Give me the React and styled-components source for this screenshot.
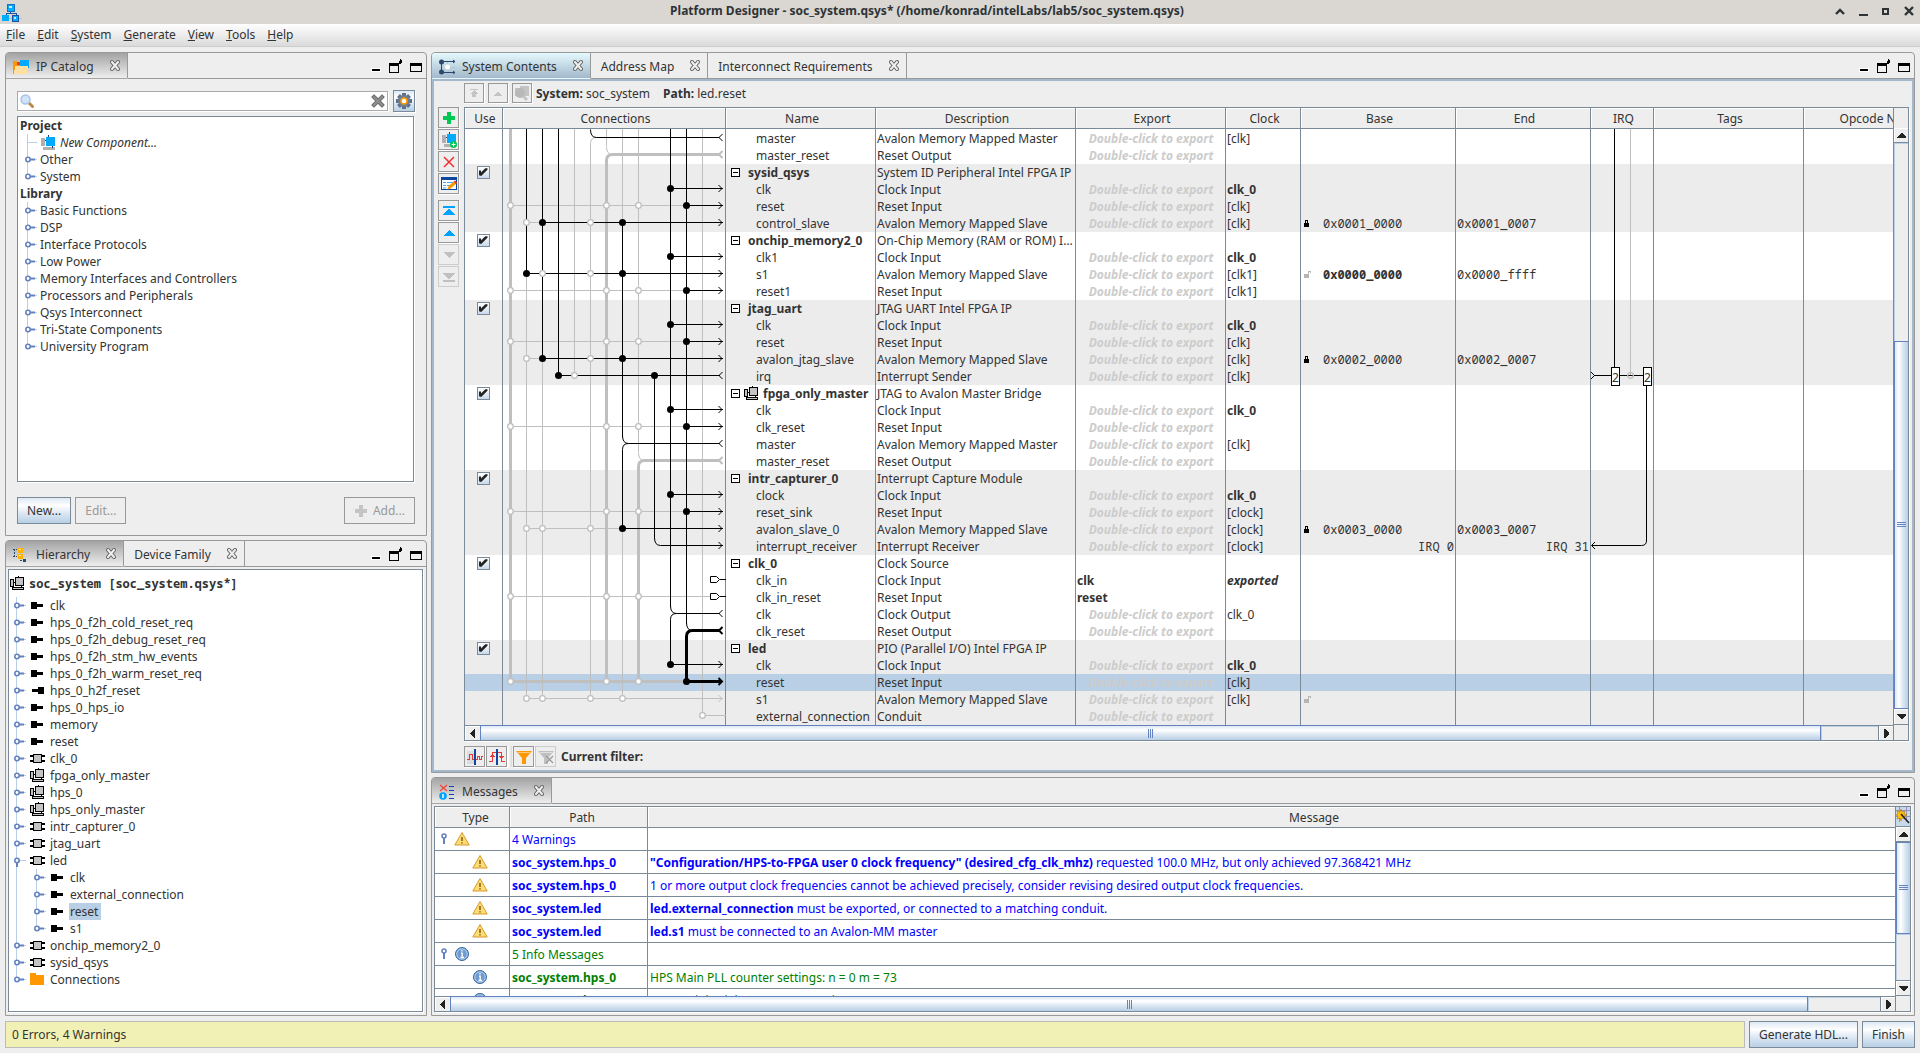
import React from "react";
import styled, { createGlobalStyle, css } from "styled-components";

const GlobalStyle = createGlobalStyle`
  * { box-sizing: border-box; }
  body {
    margin: 0;
    background: #eeeeee;
    color: #333333;
    font-family: "Noto Sans", "Open Sans", sans-serif;
    font-size: 12px;
    line-height: 17px;
  }
  button, input { font: inherit; color: inherit; margin: 0; }
  svg { display: block; flex: none; }
`;

const LINE = "#7a8a99";
const EDGE = "#999999";
const BLUE = "#6382bf";
const PALE = "#b8cfe5";
const WIRE = "#bfbfbf";
const mono = `"Noto Sans Mono", "DejaVu Sans Mono", "Liberation Mono", monospace`;
const ocean = (dir) =>
  `linear-gradient(${dir}, #dde8f3 0%, #ffffff 30%, #dde8f3 60%, #b8cfe5 100%)`;

/* ---------- window frame ---------- */

const Window = styled.div`
  display: flex;
  flex-direction: column;
  height: 100vh;
  min-width: 1100px;
  overflow: hidden;
`;

const TitleBar = styled.header`
  display: grid;
  grid-template-columns: 40px 1fr 106px;
  align-items: center;
  height: 24px;
  flex: none;
  padding: 0 2px;
  background: #dad6d2;
`;

const Title = styled.h1`
  margin: 0;
  padding-bottom: 3px;
  font-size: 12px;
  line-height: 18px;
  text-align: center;
  color: #2e3436;
  white-space: nowrap;
`;

const WindowControls = styled.div`
  display: flex;
  gap: 9px;
  justify-content: flex-end;
  padding: 0 2px 3px 0;
`;

const IconButton = styled.button`
  display: flex;
  align-items: center;
  justify-content: center;
  flex: none;
  padding: 0;
  border: 0;
  background: none;
`;

const MenuBar = styled.nav`
  display: flex;
  gap: 12px;
  height: 23px;
  flex: none;
  padding: 1px 6px 0;
  background: linear-gradient(#ffffff, #dadada);
  border-bottom: 1px solid #cccccc;
`;

const MenuItem = styled.button`
  padding: 0;
  border: 0;
  background: none;
  line-height: 17px;
  height: 18px;
  &::first-letter { text-decoration: underline; }
`;

const Workspace = styled.main`
  display: grid;
  grid-template-columns: 422px minmax(0, 1fr);
  gap: 4px;
  flex: 1;
  min-height: 0;
  padding: 5px;
`;

const Column = styled.div`
  display: flex;
  flex-direction: column;
  gap: 4px;
  min-height: 0;
  min-width: 0;
`;

const Panel = styled.section`
  display: flex;
  flex-direction: column;
  flex: ${(p) => (p.$size ? `0 0 ${p.$size}px` : "1")};
  min-height: 0;
  min-width: 0;
  border: 1px solid ${EDGE};
  border-radius: 4px 4px 0 0;
  overflow: hidden;
`;

const TabStrip = styled.div`
  display: flex;
  height: 26px;
  flex: none;
`;

const TabBox = styled.div`
  display: flex;
  align-items: center;
  padding: 0 7px 0 ${(p) => (p.$active ? 7 : 10)}px;
  border-right: 1px solid ${EDGE};
  border-bottom: 1px solid ${(p) => (p.$active ? "transparent" : EDGE)};
  ${(p) =>
    p.$active === "focus" &&
    css`background: linear-gradient(#e4fafd, #a3b8cc);`}
  ${(p) =>
    p.$active === "plain" &&
    css`background: linear-gradient(#a3a3a3, #eeeeee);`}
`;

const TabLabel = styled.button`
  display: flex;
  align-items: center;
  gap: 7px;
  margin-right: 16px;
  padding: 2px 0 0;
  border: 0;
  background: none;
  line-height: 17px;
  white-space: nowrap;
`;

const TabTools = styled.div`
  display: flex;
  flex: 1;
  align-items: center;
  justify-content: flex-end;
  gap: 6px;
  padding-right: 3px;
  border-bottom: 1px solid ${EDGE};
`;

/* ---------- buttons ---------- */

const TextButton = styled.button`
  display: flex;
  align-items: center;
  gap: 5px;
  height: 27px;
  padding: 0 9px;
  border: 1px solid ${LINE};
  background: ${ocean("to bottom")};
  white-space: nowrap;
  &:disabled {
    background: #eeeeee;
    border-color: ${EDGE};
    color: ${EDGE};
  }
`;

const ToolButton = styled.button`
  display: flex;
  align-items: center;
  justify-content: center;
  flex: none;
  width: ${(p) => p.$size || 21}px;
  height: ${(p) => p.$size || 21}px;
  padding: 0;
  border: 1px solid ${(p) => (p.$accent ? LINE : EDGE)};
  background: ${(p) => (p.$accent ? ocean("to bottom") : "#eeeeee")};
  box-shadow: 1px 1px 0 #ffffff;
  ${(p) => p.$faint && css`border-color: #cccccc; box-shadow: none;`}
`;

/* ---------- IP catalog ---------- */

const CatalogBody = styled.div`
  display: flex;
  flex-direction: column;
  flex: 1;
  min-height: 0;
  padding: 11px;
`;

const SearchRow = styled.div`
  display: flex;
  align-items: center;
  gap: 5px;
  margin-bottom: 4px;
`;

const SearchBox = styled.label`
  display: flex;
  align-items: center;
  flex: 1;
  height: 20px;
  padding: 0 2px;
  border: 1px solid #aaaaaa;
  background: #ffffff;
  box-shadow: 1px 1px 0 #ffffff;
`;

const SearchInput = styled.input`
  flex: 1;
  min-width: 0;
  height: 17px;
  border: 0;
  outline: 0;
  background: none;
`;

const TreeBox = styled.div`
  flex: 1;
  min-height: 0;
  overflow: hidden;
  margin: ${(p) => p.$margin || "0"};
  border: 1px solid ${LINE};
  box-shadow: 1px 1px 0 #ffffff;
  background: #ffffff;
`;

const Tree = styled.ul`
  margin: 0;
  padding: 0;
  list-style: none;
`;

const TreeRow = styled.li`
  display: flex;
  align-items: center;
  height: 17px;
  padding-left: ${(p) => p.$indent}px;
  white-space: nowrap;
`;

const TreeHeading = styled.li`
  height: 17px;
  padding-left: 2px;
  font-weight: 700;
`;

const TreeText = styled.span`
  padding: 0 3px 0 1px;
  margin-left: ${(p) => p.$gap}px;
  font-style: ${(p) => (p.$italic ? "italic" : "normal")};
  background: ${(p) => (p.$selected ? PALE : "transparent")};
`;

const RootRow = styled.div`
  display: flex;
  align-items: center;
  gap: 4px;
  height: 27px;
  padding: 0 0 1px 1px;
  font-family: ${mono};
  font-weight: 700;
  white-space: pre;
`;

const ActionRow = styled.div`
  display: flex;
  gap: 4px;
  margin-top: 15px;
`;

const Spacer = styled.div`
  flex: 1;
`;

/* ---------- system contents ---------- */

const ContentsBody = styled.div`
  display: grid;
  grid-template-columns: 21px minmax(0, 1fr);
  grid-template-rows: 20px minmax(0, 1fr) 22px;
  column-gap: 5px;
  row-gap: 4px;
  flex: 1;
  min-height: 0;
  padding: 2px 3px 3px 4px;
  border: 2px solid #a3b8cc;
`;

const PathBar = styled.div`
  grid-column: 2;
  display: flex;
  align-items: center;
  gap: 4px;
`;

const PathText = styled.span`
  margin-right: 9px;
  white-space: nowrap;
`;

const SideTools = styled.div`
  grid-column: 1;
  grid-row: 2;
  display: flex;
  flex-direction: column;
  gap: 1px;
`;

const SideGap = styled.div`
  height: 4px;
`;

const FilterBar = styled.div`
  grid-column: 2;
  display: flex;
  align-items: flex-end;
  gap: 1px;
  font-weight: 700;
`;

const FilterDivider = styled.div`
  width: 4px;
  height: 21px;
  background: linear-gradient(to right, #ffffff, #d8d8d8);
`;

const FilterLabel = styled.span`
  margin-left: 4px;
  line-height: 20px;
`;

const ScrollFrame = styled.div`
  display: grid;
  grid-template-columns: minmax(0, 1fr) 14px;
  grid-template-rows: 20px minmax(0, 1fr) 15px;
  min-height: 0;
  flex: 1;
  margin: ${(p) => p.$margin || "0"};
  border: 1px solid ${LINE};
  box-shadow: 1px 1px 0 #ffffff;
`;

const Viewport = styled.div`
  position: relative;
  grid-column: 1;
  grid-row: 1 / 3;
  overflow: hidden;
  border-right: 1px solid ${LINE};
  background: #ffffff;
`;

const Corner = styled.div`
  grid-column: 2;
  grid-row: 1;
  overflow: hidden;
  border-bottom: 1px solid ${(p) => (p.$plain ? "#eeeeee" : LINE)};
`;

const Grid = styled.table`
  table-layout: fixed;
  width: ${(p) => p.$width}px;
  border-spacing: 0;
  border-collapse: separate;
`;

const HeadCell = styled.th`
  height: 21px;
  padding: 0 0 0 ${(p) => p.$shift || 3}px;
  border-right: 1px solid ${LINE};
  border-bottom: 1px solid ${LINE};
  background: #eeeeee;
  box-shadow: inset 1px 1px 0 #ffffff;
  font-weight: 400;
  text-align: center;
  white-space: nowrap;
`;

const BodyRow = styled.tr`
  background: ${(p) => (p.$selected ? PALE : p.$shade ? "#ececec" : "#ffffff")};
`;

const Cell = styled.td`
  height: 17px;
  padding: 0 0 0 1px;
  border-right: 1px solid ${LINE};
  overflow: hidden;
  white-space: nowrap;
  text-overflow: ellipsis;
  font-weight: ${(p) => (p.$bold ? 700 : 400)};
  font-style: ${(p) => (p.$italic ? "italic" : "normal")};
  text-align: ${(p) => p.$align || "left"};
`;

const UseCell = styled(Cell)`
  padding: 0 1px 0 0;
`;

const GapRow = styled.tr`
  height: 1px;
`;

const GapCell = styled.td`
  padding: 0;
  border-right: 1px solid ${LINE};
`;

const DescCell = styled(Cell)`
  padding-right: 2px;
`;

const MonoCell = styled(Cell)`
  font-family: ${mono};
  padding-right: 1px;
`;

const ExportHint = styled(Cell)`
  color: #cccccc;
  font-weight: 700;
  font-style: italic;
  text-align: center;
`;

const NameWrap = styled.span`
  display: flex;
  align-items: center;
  gap: ${(p) => (p.$sub ? 4 : 8)}px;
  padding-left: ${(p) => (p.$child ? 29 : 4)}px;
`;

const BaseWrap = styled.span`
  display: flex;
  align-items: center;
  gap: 12px;
  padding-left: 2px;
  height: 17px;
`;

const UseBox = styled.input`
  appearance: none;
  display: block;
  width: 13px;
  height: 13px;
  margin: 0 auto;
  border: 1px solid ${LINE};
  background: linear-gradient(#ffffff, #c8d9ea);
  &:checked::before {
    content: "";
    display: block;
    width: 9px;
    height: 8px;
    margin: 1px;
    background: #222222;
    clip-path: polygon(0 32%, 28% 32%, 28% 56%, 75% 4%, 100% 4%, 100% 22%, 30% 100%, 0 88%);
  }
`;

/* drawings that lie over the rows of the table */
const Overlay = styled.svg`
  position: absolute;
  top: 21px;
  left: ${(p) => p.$left}px;
  pointer-events: none;
`;

/* ---------- scroll bars ---------- */

const BarBox = styled.div`
  display: flex;
  flex-direction: ${(p) => (p.$vertical ? "column" : "row")};
  grid-column: ${(p) => (p.$vertical ? 2 : 1)};
  grid-row: ${(p) => (p.$vertical ? 2 : 3)};
  background: #eeeeee;
  border-${(p) => (p.$vertical ? "bottom" : "right")}: 1px solid ${LINE};
  ${(p) => !p.$vertical && css`border-top: 1px solid ${LINE};`}
`;

const ArrowButton = styled(IconButton)`
  width: ${(p) => (p.$vertical ? 14 : 15)}px;
  height: ${(p) => (p.$vertical ? 15 : 14)}px;
  box-shadow: inset 1px 1px 0 #ffffff;
  border: 0 solid ${LINE};
  ${(p) => p.$edge && css`border-${p.$edge}-width: 1px;`}
`;

const Track = styled.div`
  flex: ${(p) => p.$part} ${(p) => p.$part} 0px;
  box-shadow: inset 1px 1px 0 ${PALE};
`;

const Thumb = styled.div`
  display: flex;
  align-items: center;
  justify-content: center;
  flex: ${(p) => p.$part} ${(p) => p.$part} 0px;
  border: 1px solid ${BLUE};
  ${(p) =>
    p.$vertical
      ? css`border-right: 0; background: ${ocean("to right")};`
      : css`border-bottom: 0; margin-top: -1px; background: ${ocean("to bottom")};`}
`;

/* ---------- messages ---------- */

const MsgCell = styled.td`
  height: 23px;
  padding: 0 2px;
  border-right: 1px solid ${LINE};
  border-bottom: 1px solid ${LINE};
  color: ${(p) => p.$tone};
  font-weight: ${(p) => (p.$bold ? 700 : 400)};
  white-space: nowrap;
`;

const TypeWrap = styled.span`
  display: flex;
  align-items: center;
  gap: 7px;
  padding-left: ${(p) => (p.$child ? 35 : 4)}px;
`;

/* ---------- status ---------- */

const StatusBar = styled.footer`
  display: flex;
  gap: 4px;
  flex: none;
  padding: 0 5px 5px;
`;

const StatusText = styled.output`
  flex: 1;
  height: 27px;
  padding: 4px 6px;
  border: 1px solid #bbbbbb;
  background: #f2f1b5;
`;

/* ---------- icons ---------- */

const Svg = ({ w = 16, h = 16, crisp = true, children }) => (
  <svg
    width={w}
    height={h}
    viewBox={`0 0 ${w} ${h}`}
    fill="none"
    shapeRendering={crisp ? "crispEdges" : "auto"}
    aria-hidden="true"
  >
    {children}
  </svg>
);

const AppIcon = () => (
  <Svg w={20} h={19}>
    <path d="M8.500 7v4M4.500 13v-3h10v3" stroke="#1c4fa0" />
    <path d="M0 15.500h20" stroke="#7fd0ff" />
    <rect x="5" y="1" width="7" height="7" fill="#00aeff" stroke="#1c6fc0" />
    <rect x="0" y="12" width="7" height="6" fill="#00aeff" />
    <rect x="10" y="12" width="6" height="6" fill="#00aeff" stroke="#1c4fa0" />
    <rect x="7" y="3" width="3" height="2" fill="#c9efff" />
    <rect x="12" y="14" width="2" height="2" fill="#c9efff" />
  </Svg>
);

const CloseIcon = () => (
  <Svg w={10} h={11} crisp={false}>
    <path d="M2 2l6 7M8 2l-6 7" stroke="#666" strokeWidth="4" strokeLinecap="square" />
    <path d="M2 2l6 7M8 2l-6 7" stroke="#eee" strokeWidth="2" strokeLinecap="square" />
  </Svg>
);

const MinIcon = () => (
  <Svg w={14} h={14}>
    <rect x="2" y="9" width="10" height="4" fill="#fff" />
    <rect x="3" y="10" width="8" height="2" fill="#000" />
  </Svg>
);

const FloatIcon = () => (
  <Svg w={14} h={14}>
    <rect x="0.500" y="4.500" width="9" height="9" fill="#eee" stroke="#000" />
    <rect x="0" y="4" width="10" height="3" fill="#000" />
    <path d="M8 4.500h2v-2h3M11.500 0v5M12.500 1v3" stroke="#000" />
  </Svg>
);

const MaxIcon = () => (
  <Svg w={14} h={14}>
    <rect x="1.500" y="4.500" width="11" height="8" fill="#eee" stroke="#000" />
    <rect x="1" y="4" width="12" height="3" fill="#000" />
  </Svg>
);

const CatalogIcon = () => (
  <Svg w={16} h={16}>
    <path d="M0 2h4l1 2h3v11H0z" fill="#ff9800" />
    <rect x="7" y="1" width="9" height="8" fill="#00aaff" />
    <rect x="4" y="3" width="3" height="3" fill="#e53935" />
    <path d="M2 7h13l-1 8H1z" fill="#ffe0a0" />
  </Svg>
);

const HierarchyIcon = () => (
  <Svg w={16} h={16}>
    <path d="M1.500 2v8M0 2.500h4M0 9.500h4M6.500 13.500h6" stroke="#2b4a6b" strokeDasharray="2 1" />
    <rect x="5" y="1" width="5" height="5" fill="#ffb300" />
    <rect x="5" y="7" width="5" height="5" fill="#ffb300" />
    <rect x="6" y="2" width="2" height="1" fill="#fff3b0" />
    <rect x="6" y="8" width="2" height="1" fill="#fff3b0" />
    <rect x="10" y="12" width="3" height="3" fill="#2b4a6b" />
  </Svg>
);

const ContentsIcon = () => (
  <Svg w={16} h={16} crisp={false}>
    <path d="M2.500 2.500v11M3 2.500h13M3 13.500h13" stroke="#2b4a6b" />
    <path d="M8.500 3v10M9 8.500h7" stroke="#b8c8d4" />
    <circle cx="2.500" cy="3" r="2.500" fill="#2b4a6b" />
    <circle cx="2.500" cy="13" r="2.500" fill="#2b4a6b" />
    <circle cx="8.500" cy="8" r="2.500" fill="#fff" />
    <path d="M14 1l2 1.500L14 4M14 12l2 1.500-2 1.500" stroke="#2b4a6b" />
  </Svg>
);

const MessagesIcon = () => (
  <Svg w={16} h={16} crisp={false}>
    <path d="M1 1l7 6M8 1L1 7" stroke="#f44336" strokeWidth="1.200" />
    <circle cx="4" cy="12" r="3.800" fill="#00a2ff" />
    <path d="M4 10v4" stroke="#fff" strokeWidth="1.500" />
    <path d="M10 2.500h5M10 6.500h5M10 10.500h5M10 14.500h5" stroke="#0d47a1" strokeWidth="1.200" />
  </Svg>
);

const SearchIcon = () => (
  <Svg w={14} h={14} crisp={false}>
    <path d="M9 9l3.500 3.500" stroke="#b98a4a" strokeWidth="3" strokeLinecap="round" />
    <circle cx="5.500" cy="5.500" r="4.500" fill="#cfe4fb" stroke="#a9c4e6" strokeWidth="1.500" />
  </Svg>
);

const ClearIcon = () => (
  <Svg w={14} h={14} crisp={false}>
    <path d="M3 3l8 8M11 3l-8 8" stroke="#666" strokeWidth="4" strokeLinecap="square" />
    <path d="M3 3l8 8M11 3l-8 8" stroke="#8e8e8e" strokeWidth="2.400" strokeLinecap="square" />
  </Svg>
);

const GearIcon = () => (
  <Svg w={16} h={16} crisp={false}>
    <g stroke="#5d7088" strokeWidth="4">
      <path d="M8 0v16M0 8h16M2.500 2.500l11 11M13.500 2.500l-11 11" />
    </g>
    <circle cx="8" cy="8" r="6" fill="#6a7d95" />
    <circle cx="8" cy="8" r="3" fill="#fff" stroke="#ff9800" strokeWidth="1.600" />
  </Svg>
);

const PlusIcon = ({ color = "#00c853" }) => (
  <Svg w={12} h={12}>
    <path d="M4 0h4v4h4v4H8v4H4V8H0V4h4z" fill={color} />
  </Svg>
);

const NewCompIcon = ({ badge }) => (
  <Svg w={16} h={16}>
    <rect x="1" y="3" width="4" height="8" fill="#b0b0b0" />
    <rect x="3" y="12" width="12" height="3" fill="#b0b0b0" />
    <path d="M8.500 0v2M5 5.500h2M12.500 10v3" stroke="#123a7a" />
    <rect x="6" y="2" width="9" height="9" fill="#00aaff" />
    {badge && (
      <g shapeRendering="auto">
        <circle cx="12.500" cy="12.500" r="3.500" fill="#00c853" />
        <path d="M12.500 10.500v4M10.500 12.500h4" stroke="#fff" />
      </g>
    )}
  </Svg>
);

const DrillIcon = () => (
  <Svg w={16} h={16} crisp={false}>
    <path d="M6 1h9v10H6zM1 3h4v8H1z" fill="#c4c4c4" />
    <circle cx="6" cy="8" r="5" fill="#b8b8b8" />
    <path d="M9 11l4 4" stroke="#c4c4c4" strokeWidth="3" />
  </Svg>
);

const DeleteIcon = () => (
  <Svg w={14} h={14} crisp={false}>
    <path d="M2 2l10 10M12 2L2 12" stroke="#f03030" strokeWidth="1.500" />
  </Svg>
);

const EditIcon = () => (
  <Svg w={16} h={16} crisp={false}>
    <rect x="0.500" y="1.500" width="15" height="12" fill="#fff" stroke="#0d47a1" />
    <rect x="0" y="1" width="16" height="3" fill="#0d47a1" />
    <path d="M2 6.500h3M6 6.500h6M2 9.500h3M6 9.500h3M2 12h3" stroke="#49a8ee" />
    <path d="M6.500 13.500l1-3.500 6-5 2 2.500-6 5z" fill="#ff9800" />
    <path d="M13.500 5l2 2.500" stroke="#e53935" strokeWidth="2" />
  </Svg>
);

const MoveIcon = ({ dir, end, color, size = 14 }) => (
  <Svg w={14} h={14}>
    <g transform={dir === "down" ? "rotate(180 7 7)" : undefined}>
      {end && <rect x="1" y="2" width="12" height="2" fill={color} />}
      <path d={end ? "M7 4l6 7H1z" : size < 14 ? "M7 5l4 5H3z" : "M7 4l6 6H1z"} fill={color} />
    </g>
  </Svg>
);

const SmallTop = () => (
  <Svg w={14} h={14}>
    <rect x="3" y="3" width="8" height="1" fill="#c4c4c4" />
    <path d="M7 4l4 4H9v3H5V8H3z" fill="#c4c4c4" />
  </Svg>
);

const ClockDomainIcon = () => (
  <Svg w={16} h={16}>
    <rect x="0" y="2" width="7" height="13" fill="#dcdcdc" />
    <path d="M0 10.500h2.500v-5h3v5h5v-3h2v3h1.500v-3H16" stroke="#e53935" />
    <rect x="7" y="0" width="2" height="16" fill="#0d47a1" />
  </Svg>
);

const ResetDomainIcon = () => (
  <Svg w={16} h={16}>
    <path d="M0 12.500h3.500v-9h9v9H16" stroke="#e53935" />
    <path d="M1 7.500h5M10 7.500h5M2 6.500h3M11 8.500h3" stroke="#e53935" />
    <rect x="7" y="0" width="2" height="16" fill="#0d47a1" />
  </Svg>
);

const FunnelIcon = ({ color, cross }) => (
  <Svg w={16} h={16} crisp={false}>
    <path d="M0 2h16l-6 7v6H6V9z" fill={color} />
    <path d="M2 3.500h12" stroke="#fff" opacity="0.500" />
    {cross && <path d="M8 7l7 7M15 7l-7 7" stroke="#999" strokeWidth="1.200" />}
  </Svg>
);

const PortIcon = ({ flip }) => (
  <Svg w={15} h={15}>
    <g transform={flip ? "rotate(180 7.500 7.500)" : undefined}>
      <path d="M1 4h6v2h6v3H7v2H1z" fill="#000" />
    </g>
  </Svg>
);

const ModuleIcon = () => (
  <Svg w={15} h={15}>
    <path d="M0 5h15M0 10h15" stroke="#000" strokeWidth="2" />
    <rect x="3.500" y="3.500" width="8" height="8" fill="#c4c4c4" stroke="#000" />
  </Svg>
);

const SubsystemIcon = () => (
  <Svg w={15} h={15}>
    <rect x="0.500" y="3.500" width="3" height="7" fill="#c4c4c4" stroke="#000" />
    <path d="M8 0v2M4 6h2M11 10v2" stroke="#000" strokeWidth="1" />
    <rect x="5.500" y="1.500" width="8" height="8" fill="#c4c4c4" stroke="#000" />
    <rect x="2.500" y="11.500" width="11" height="2" fill="#c4c4c4" stroke="#000" />
  </Svg>
);

const FolderIcon = () => (
  <Svg w={15} h={15}>
    <path d="M0 1h6v2h8v10H0z" fill="#ff9800" />
  </Svg>
);

const LockIcon = ({ open }) => (
  <Svg w={7} h={9}>
    <rect x="0" y="4" width="5" height="4" fill={open ? "#b5b5b5" : "#000"} />
    {open ? (
      <path d="M4.500 4V1.500h2V3" stroke="#b5b5b5" />
    ) : (
      <path d="M1 4V1h3v3H3V2H2v2z" fill="#000" />
    )}
  </Svg>
);

const MinusBox = () => (
  <Svg w={9} h={9}>
    <rect x="0.500" y="0.500" width="8" height="8" fill="#fff" stroke="#000" />
    <path d="M2 4.500h5" stroke="#000" />
  </Svg>
);

const WarnIcon = () => (
  <Svg w={16} h={16} crisp={false}>
    <path d="M8 1.500L15.200 14H.8z" fill="#fbdc75" stroke="#d99a2b" strokeLinejoin="round" />
    <path d="M8 6v4M8 11.200v1.300" stroke="#8a6416" strokeWidth="1.600" />
  </Svg>
);

const InfoIcon = () => (
  <Svg w={16} h={16} crisp={false}>
    <circle cx="8" cy="8" r="6.500" fill="#6f9bd1" stroke="#37699f" />
    <circle cx="8" cy="8" r="5.200" stroke="#c7dcf3" strokeWidth="0.800" />
    <path d="M8 4v1.600M7 7.200h1.200v4M6.500 11.500h3.500" stroke="#fff" strokeWidth="1.300" />
  </Svg>
);

const ExpandPin = () => (
  <Svg w={6} h={12} crisp={false}>
    <circle cx="3" cy="3" r="2" stroke={BLUE} strokeWidth="1.600" fill="#fff" />
    <path d="M3 5v6" stroke={BLUE} strokeWidth="2" />
  </Svg>
);

const WandIcon = () => (
  <Svg w={14} h={19} crisp={false}>
    <rect width="14" height="19" fill="#c8d9ea" />
    <path d="M0 3.500h14M3.500 0v15M10.500 0v15M0 9.500h14" stroke="#9b8fc0" />
    <path d="M5 2l1 3 3-1-1 3 3 1-3 1 1 3-3-1-1 3-1-3-3 1 1-3-2-1 2-1-1-3 3 1z" fill="#ffc107" stroke="#b57a00" strokeWidth="0.600" />
    <path d="M5 7l8 9" stroke="#222" strokeWidth="1.600" />
  </Svg>
);

const Arrow = ({ d }) => (
  <Svg w={9} h={9}>
    <path
      fill="#222"
      d={
        {
          up: "M4 2h1l4 4v1H0V6z",
          down: "M0 2h9v1L5 7H4L0 3z",
          left: "M2 4v1l4 4h1V0H6z",
          right: "M7 4v1L3 9H2V0h1z",
        }[d]
      }
    />
  </Svg>
);

const TreeHandle = ({ kind = "closed", last }) => (
  <Svg w={14} h={17} crisp={false}>
    <path d={last ? "M3.500 0v8" : "M3.500 0v17"} stroke={PALE} />
    {kind === "leaf" && <path d="M4 8.500h9" stroke={PALE} />}
    {kind !== "leaf" && kind !== "through" && (
      <>
        <path d="M4 8.500h9" stroke={PALE} />
        <path d={kind === "open" ? "M4 9v6" : "M5 8.500h6"} stroke={BLUE} strokeWidth="2" />
        <circle cx="4" cy="8.500" r="2.200" stroke={BLUE} strokeWidth="1.600" fill="#fff" />
      </>
    )}
  </Svg>
);

/* ---------- shared parts ---------- */

function Tab({ icon, label, active }) {
  return (
    <TabBox $active={active}>
      <TabLabel type="button">
        {icon}
        {label}
      </TabLabel>
      <IconButton type="button" aria-label={`Close ${label}`}>
        <CloseIcon />
      </IconButton>
    </TabBox>
  );
}

const PanelTools = () => (
  <TabTools>
    <IconButton type="button" aria-label="Minimize"><MinIcon /></IconButton>
    <IconButton type="button" aria-label="Detach"><FloatIcon /></IconButton>
    <IconButton type="button" aria-label="Maximize"><MaxIcon /></IconButton>
  </TabTools>
);

function ScrollBar({ vertical, before, thumb, after }) {
  return (
    <BarBox $vertical={vertical}>
      <ArrowButton type="button" $vertical={vertical} $edge={vertical && "bottom"} aria-label="Scroll back">
        <Arrow d={vertical ? "up" : "left"} />
      </ArrowButton>
      {before > 0 && <Track $part={before} />}
      <Thumb $vertical={vertical} $part={thumb}>
        <Svg w={9} h={9}>
          <path
            d={vertical ? "M0 1.500h9M0 3.500h9M0 5.500h9" : "M2.500 0v9M4.500 0v9M6.500 0v9"}
            stroke={BLUE}
            strokeWidth="1"
          />
        </Svg>
      </Thumb>
      {after > 0 && <Track $part={after} />}
      <ArrowButton type="button" $vertical={vertical} $edge={after > 0 ? (vertical ? "top" : "left") : undefined} aria-label="Scroll forward">
        <Arrow d={vertical ? "down" : "right"} />
      </ArrowButton>
    </BarBox>
  );
}

/* ---------- data ---------- */

const library = [
  "Basic Functions",
  "DSP",
  "Interface Protocols",
  "Low Power",
  "Memory Interfaces and Controllers",
  "Processors and Peripherals",
  "Qsys Interconnect",
  "Tri-State Components",
  "University Program",
];

const hierarchy = [
  ["port", "clk"],
  ["port", "hps_0_f2h_cold_reset_req"],
  ["port", "hps_0_f2h_debug_reset_req"],
  ["port", "hps_0_f2h_stm_hw_events"],
  ["port", "hps_0_f2h_warm_reset_req"],
  ["out", "hps_0_h2f_reset"],
  ["port", "hps_0_hps_io"],
  ["port", "memory"],
  ["port", "reset"],
  ["module", "clk_0"],
  ["sub", "fpga_only_master"],
  ["sub", "hps_0"],
  ["sub", "hps_only_master"],
  ["module", "intr_capturer_0"],
  ["module", "jtag_uart"],
  ["module", "led", "open"],
  ["port", "clk", "child"],
  ["port", "external_connection", "child"],
  ["port", "reset", "child", true],
  ["port", "s1", "childLast"],
  ["module", "onchip_memory2_0"],
  ["module", "sysid_qsys"],
  ["folder", "Connections", "last"],
];

const nodeIcons = {
  port: <PortIcon />,
  out: <PortIcon flip />,
  module: <ModuleIcon />,
  sub: <SubsystemIcon />,
  folder: <FolderIcon />,
};

const AMM = "Avalon Memory Mapped Master";
const AMS = "Avalon Memory Mapped Slave";
const CI = "Clock Input";
const RI = "Reset Input";
const RO = "Reset Output";

const modules = [
  { rows: [["master", AMM, "[clk]"], ["master_reset", RO]] },
  {
    name: "sysid_qsys",
    desc: "System ID Peripheral Intel FPGA IP",
    rows: [["clk", CI, "clk_0"], ["reset", RI, "[clk]"],
      ["control_slave", AMS, "[clk]", { lock: "on", base: "0x0001_0000", end: "0x0001_0007" }]],
  },
  {
    name: "onchip_memory2_0",
    desc: "On-Chip Memory (RAM or ROM) Intel FPGA IP",
    rows: [["clk1", CI, "clk_0"],
      ["s1", AMS, "[clk1]", { lock: "off", base: "0x0000_0000", strong: true, end: "0x0000_ffff" }],
      ["reset1", RI, "[clk1]"]],
  },
  {
    name: "jtag_uart",
    desc: "JTAG UART Intel FPGA IP",
    rows: [["clk", CI, "clk_0"], ["reset", RI, "[clk]"],
      ["avalon_jtag_slave", AMS, "[clk]", { lock: "on", base: "0x0002_0000", end: "0x0002_0007" }],
      ["irq", "Interrupt Sender", "[clk]"]],
  },
  {
    name: "fpga_only_master",
    sub: true,
    desc: "JTAG to Avalon Master Bridge",
    rows: [["clk", CI, "clk_0"], ["clk_reset", RI], ["master", AMM, "[clk]"], ["master_reset", RO]],
  },
  {
    name: "intr_capturer_0",
    desc: "Interrupt Capture Module",
    rows: [["clock", CI, "clk_0"], ["reset_sink", RI, "[clock]"],
      ["avalon_slave_0", AMS, "[clock]", { lock: "on", base: "0x0003_0000", end: "0x0003_0007" }],
      ["interrupt_receiver", "Interrupt Receiver", "[clock]", { irq: ["IRQ 0", "IRQ 31"] }]],
  },
  {
    name: "clk_0",
    desc: "Clock Source",
    rows: [["clk_in", CI, "exported", { exported: "clk" }], ["clk_in_reset", RI, "", { exported: "reset" }],
      ["clk", "Clock Output", "clk_0", { plain: true }], ["clk_reset", RO]],
  },
  {
    name: "led",
    desc: "PIO (Parallel I/O) Intel FPGA IP",
    rows: [["clk", CI, "clk_0"], ["reset", RI, "[clk]", { selected: true }],
      ["s1", AMS, "[clk]", { lock: "off" }], ["external_connection", "Conduit"]],
  },
];

const columns = [
  ["Use", 38], ["Connections", 223], ["Name", 150], ["Description", 200], ["Export", 150],
  ["Clock", 75], ["Base", 155], ["End", 135], ["IRQ", 63], ["Tags", 150], ["Opcode Name", 150],
];
const tableWidth = columns.reduce((sum, c) => sum + c[1], 0);
const irqLeft = columns.slice(0, 8).reduce((sum, c) => sum + c[1], 0);

const B = "#0000ff";
const G = "#008000";
const messages = [
  ["warn", B, "4 Warnings"],
  ["warn", B, "soc_system.hps_0", '"Configuration/HPS-to-FPGA user 0 clock frequency" (desired_cfg_clk_mhz)', " requested 100.0 MHz, but only achieved 97.368421 MHz"],
  ["warn", B, "soc_system.hps_0", "", "1 or more output clock frequencies cannot be achieved precisely, consider revising desired output clock frequencies."],
  ["warn", B, "soc_system.led", "led.external_connection", " must be exported, or connected to a matching conduit."],
  ["warn", B, "soc_system.led", "led.s1", " must be connected to an Avalon-MM master"],
  ["info", G, "5 Info Messages"],
  ["info", G, "soc_system.hps_0", "", "HPS Main PLL counter settings: n = 0 m = 73"],
  ["info", G, "soc_system.hps_0", "", "HPS peripherial PLL counter settings: n = 0 m = 39"],
];

/* ---------- connection diagram ---------- */

const X = (k) => 7.5 + 16 * k;
const Y = (i) => 8.5 + 17 * i;
const TIP = 219.5;
const END = 223;
const BOTTOM = Y(34) + 8;

const V = ({ k, from = -1, to, c = "#000", w = 1 }) => (
  <path d={`M${X(k)} ${from < 0 ? 0 : Y(from)}V${Y(to)}`} stroke={c} strokeWidth={w} />
);
const H = ({ i, from, to = TIP, c = "#000", w = 1 }) => (
  <path d={`M${X(from)} ${Y(i)}H${to}`} stroke={c} strokeWidth={w} />
);
const InArrow = ({ i, c = "#000", w = 1 }) => (
  <path d={`M${TIP - 4} ${Y(i) - 3.5}l3.500 3.500l-3.500 3.500`} stroke={c} strokeWidth={w} fill="none" shapeRendering="auto" />
);
const OutArrow = ({ i, c = "#000", w = 1 }) => (
  <path d={`M${TIP} ${Y(i) - 3.5}l-3.500 3.500l3.500 3.500`} stroke={c} strokeWidth={w} fill="none" shapeRendering="auto" />
);
const Dot = ({ k, i }) => <circle cx={X(k)} cy={Y(i)} r="3.500" fill="#000" shapeRendering="auto" />;
const Ring = ({ k, i }) => (
  <circle cx={X(k)} cy={Y(i)} r="2.800" fill="#fff" stroke={WIRE} strokeWidth="1.300" shapeRendering="auto" />
);
const BendDown = ({ k, i, c = "#000", w = 1 }) => (
  <path d={`M${X(k)} ${Y(i) - 8}q0 8 6 8H${TIP - 3}`} stroke={c} strokeWidth={w} shapeRendering="auto" />
);
const BendUp = ({ k, i, c = "#000", w = 1 }) => (
  <path d={`M${X(k)} ${Y(i) + 9}v-3q0 -6 6 -6H${TIP - 3}`} stroke={c} strokeWidth={w} shapeRendering="auto" />
);

function Connections() {
  const clocks = [3, 7, 11, 16, 21, 31];
  const resets = [4, 9, 12, 17, 22];
  return (
    <Overlay $left={38} width={END} height={BOTTOM} viewBox={`0 0 ${END} ${BOTTOM}`} fill="none" shapeRendering="crispEdges">
      <V k={0} to={32} c={WIRE} w={3} />
      <V k={1} to={33} c={WIRE} />
      <V k={2} to={33} c={WIRE} />
      <V k={4} to={14} c={WIRE} />
      <V k={5} from={0.5} to={33} c={WIRE} />
      <V k={6} to={0.5} c={WIRE} />
      <V k={6} from={1.5} to={32} c={WIRE} w={3} />
      <V k={7} to={5} c={WIRE} />
      <V k={7} from={23} to={33} c={WIRE} />
      <V k={8} to={18.5} c={WIRE} />
      <V k={8} from={19.5} to={32} c={WIRE} w={3} />
      <V k={12} to={34} c={WIRE} />

      {resets.map((i) => (
        <H key={i} i={i} from={0} to={X(11)} c={WIRE} />
      ))}
      <H i={5} from={1} to={X(2)} c={WIRE} />
      <H i={13} from={1} to={X(2)} c={WIRE} />
      <H i={23} from={1} to={X(7)} c={WIRE} />
      <H i={27} from={0} to={207} c={WIRE} />
      <H i={32} from={0} to={X(11)} c={WIRE} w={3} />
      <H i={33} from={1} c={WIRE} />
      <InArrow i={33} c={WIRE} />
      <H i={34} from={12} to={END} c={WIRE} />

      <BendUp k={5} i={0} c={WIRE} />
      <BendDown k={6} i={1} c={WIRE} />
      <BendUp k={6} i={1} c={WIRE} w={3} />
      <OutArrow i={1} c={WIRE} w={2} />
      <BendDown k={8} i={19} c={WIRE} />
      <BendUp k={8} i={19} c={WIRE} w={3} />
      <OutArrow i={19} c={WIRE} w={2} />

      <V k={1} to={8} />
      <V k={2} to={13} />
      <V k={3} to={14} />
      <V k={7} from={5} to={17.6} />
      <V k={7} from={18.4} to={23} />
      <V k={9} from={14} to={23.6} />
      <V k={10} to={27.6} />
      <V k={10} from={28.4} to={31} />
      <V k={11} to={28.6} />
      <V k={11} from={29.5} to={32} w={3} />
      <BendDown k={5} i={0} />
      <OutArrow i={0} />
      <BendDown k={7} i={18} />
      <BendUp k={7} i={18} />
      <OutArrow i={18} />
      <BendDown k={9} i={24} />
      <H i={24} from={11} />
      <InArrow i={24} />
      <BendDown k={10} i={28} />
      <BendUp k={10} i={28} />
      <OutArrow i={28} />
      <BendDown k={11} i={29} />
      <BendUp k={11} i={29} w={3} />
      <OutArrow i={29} w={2} />

      {[[5, 2], [8, 1], [13, 2], [23, 7]].map(([i, k]) => (
        <React.Fragment key={i}>
          <H i={i} from={k} />
          <InArrow i={i} />
        </React.Fragment>
      ))}
      <H i={14} from={3} to={TIP - 3} />
      <OutArrow i={14} />

      {clocks.map((i) => (
        <React.Fragment key={i}>
          <H i={i} from={10} />
          <InArrow i={i} />
          <Dot k={10} i={i} />
        </React.Fragment>
      ))}
      {resets.map((i) => (
        <React.Fragment key={i}>
          <H i={i} from={11} />
          <InArrow i={i} />
          <Dot k={11} i={i} />
        </React.Fragment>
      ))}
      <H i={32} from={11} to={TIP - 1} w={3} />
      <InArrow i={32} w={2} />
      <Dot k={11} i={32} />

      {[26, 27].map((i) => (
        <path key={i} d={`M207.500 ${Y(i) - 3}h6l3 3l-3 3h-6zM217 ${Y(i)}H${END}`} stroke="#000" fill="#fff" shapeRendering="auto" />
      ))}

      {[...resets, 27, 32].map((i) =>
        [0, 6, 8].map((k) => <Ring key={`${i}-${k}`} k={k} i={i} />)
      )}
      {[[1, 5], [5, 5], [2, 8], [5, 8], [1, 13], [5, 13], [4, 14], [1, 23], [2, 23], [5, 23],
        [1, 33], [2, 33], [5, 33], [7, 33], [12, 34]].map(([k, i]) => (
        <Ring key={`${i}-${k}`} k={k} i={i} />
      ))}
      {[[2, 5], [7, 5], [1, 8], [7, 8], [2, 13], [7, 13], [3, 14], [9, 14], [7, 23]].map(([k, i]) => (
        <Dot key={`${i}-${k}`} k={k} i={i} />
      ))}
    </Overlay>
  );
}

function IrqLines() {
  const y = Y(14);
  return (
    <Overlay $left={irqLeft} width={62} height={BOTTOM} viewBox={`0 0 62 ${BOTTOM}`} fill="none" shapeRendering="crispEdges">
      <path d={`M23.500 0V${y}`} stroke="#000" />
      <path d={`M39.500 0V${y}`} stroke={WIRE} />
      <path d={`M3 ${y}H55.500V${Y(24) - 5}`} stroke="#000" />
      <path d={`M55.500 ${Y(24) - 5}q0 5 -5 5H1M4 ${Y(24) - 3.5}l-3.500 3.500l3.500 3.500M0 ${y - 3.5}l3.500 3.500l-3.500 3.500`} stroke="#000" shapeRendering="auto" />
      <circle cx="39.500" cy={y} r="2.800" stroke={WIRE} strokeWidth="1.300" shapeRendering="auto" />
      {[20.5, 52.5].map((x) => (
        <g key={x}>
          <rect x={x} y={y - 8} width="8" height="18" fill="#fff" stroke="#000" />
          <text x={x + 4} y={y + 6} textAnchor="middle" fontSize="12" fill="#333">2</text>
        </g>
      ))}
    </Overlay>
  );
}

/* ---------- panels ---------- */

function CatalogPanel() {
  return (
    <Panel $size={484}>
      <TabStrip>
        <Tab icon={<CatalogIcon />} label="IP Catalog" active="plain" />
        <PanelTools />
      </TabStrip>
      <CatalogBody>
        <SearchRow>
          <SearchBox>
            <SearchIcon />
            <SearchInput type="text" aria-label="Search IP catalog" />
            <IconButton type="button" aria-label="Clear search"><ClearIcon /></IconButton>
          </SearchBox>
          <ToolButton type="button" $size={22} $accent aria-label="Search options"><GearIcon /></ToolButton>
        </SearchRow>
        <TreeBox $margin="0 1px 0 0">
          <Tree>
            <TreeHeading>Project</TreeHeading>
            <TreeRow $indent={6}>
              <TreeHandle kind="leaf" />
              <Svg w={2} h={17} />
              <NewCompIcon />
              <TreeText $gap={3} $italic>New Component...</TreeText>
            </TreeRow>
            {["Other", "System"].map((t, i) => (
              <TreeRow key={t} $indent={6}>
                <TreeHandle last={i === 1} />
                <TreeText $gap={1}>{t}</TreeText>
              </TreeRow>
            ))}
            <TreeHeading>Library</TreeHeading>
            {library.map((t, i) => (
              <TreeRow key={t} $indent={6}>
                <TreeHandle last={i === library.length - 1} />
                <TreeText $gap={1}>{t}</TreeText>
              </TreeRow>
            ))}
          </Tree>
        </TreeBox>
        <ActionRow>
          <TextButton type="button">New...</TextButton>
          <TextButton type="button" disabled>Edit...</TextButton>
          <Spacer />
          <TextButton type="button" disabled>
            <Svg w={14} h={12}><path d="M5 0h4v4h4v4H9v4H5V8H1V4h4z" fill="#c4c4c4" /></Svg>
            Add...
          </TextButton>
        </ActionRow>
      </CatalogBody>
    </Panel>
  );
}

function HierarchyPanel() {
  return (
    <Panel>
      <TabStrip>
        <Tab icon={<HierarchyIcon />} label="Hierarchy" active="plain" />
        <Tab label="Device Family" />
        <PanelTools />
      </TabStrip>
      <TreeBox $margin="2px 3px 3px 2px">
        <RootRow><SubsystemIcon />soc_system [soc_system.qsys*]</RootRow>
        <Tree>
          {hierarchy.map(([type, label, level, selected], i) => {
            const child = level === "child" || level === "childLast";
            return (
              <TreeRow key={i} $indent={4}>
                {child && (
                  <>
                    <TreeHandle kind="through" />
                    <Svg w={6} h={17} />
                  </>
                )}
                <TreeHandle
                  kind={level === "open" ? "open" : "closed"}
                  last={level === "last" || level === "childLast"}
                />
                <Svg w={3} h={17} />
                {nodeIcons[type]}
                <TreeText $gap={4} $selected={selected}>{label}</TreeText>
              </TreeRow>
            );
          })}
        </Tree>
      </TreeBox>
    </Panel>
  );
}

function ModuleRows({ mod, shade }) {
  return (
    <>
      {mod.name && (
        <BodyRow $shade={shade}>
          <UseCell><UseBox type="checkbox" defaultChecked aria-label={`Use ${mod.name}`} /></UseCell>
          <Cell />
          <Cell $bold>
            <NameWrap $sub={mod.sub}>
              <MinusBox />
              {mod.sub && <SubsystemIcon />}
              {mod.name}
            </NameWrap>
          </Cell>
          <DescCell>{mod.desc}</DescCell>
          {columns.slice(4).map(([c]) => <Cell key={c} />)}
        </BodyRow>
      )}
      {mod.rows.map(([name, desc, clock, x = {}], i) => (
        <BodyRow key={i} $shade={shade} $selected={x.selected}>
          <Cell />
          <Cell />
          <Cell><NameWrap $child>{name}</NameWrap></Cell>
          <DescCell>{desc}</DescCell>
          {x.exported ? <Cell $bold>{x.exported}</Cell> : <ExportHint>Double-click to export</ExportHint>}
          <Cell $bold={(clock === "clk_0" && !x.plain) || clock === "exported"} $italic={clock === "exported"}>{clock}</Cell>
          <MonoCell $bold={x.strong} $align={x.irq && "right"}>
            {x.lock && <BaseWrap><LockIcon open={x.lock === "off"} />{x.base}</BaseWrap>}
            {x.irq && x.irq[0]}
          </MonoCell>
          <MonoCell $align={x.irq && "right"}>{x.irq ? x.irq[1] : x.end}</MonoCell>
          <Cell /><Cell /><Cell />
        </BodyRow>
      ))}
    </>
  );
}

function ContentsPanel() {
  return (
    <Panel>
      <TabStrip>
        <Tab icon={<ContentsIcon />} label="System Contents" active="focus" />
        <Tab label="Address Map" />
        <Tab label="Interconnect Requirements" />
        <PanelTools />
      </TabStrip>
      <ContentsBody>
        <PathBar>
          <ToolButton type="button" $size={20} aria-label="Go to top"><SmallTop /></ToolButton>
          <ToolButton type="button" $size={20} aria-label="Go up"><MoveIcon color="#c4c4c4" size={10} /></ToolButton>
          <ToolButton type="button" $size={20} aria-label="Drill in"><DrillIcon /></ToolButton>
          <PathText><b>System:</b> soc_system</PathText>
          <PathText><b>Path:</b> led.reset</PathText>
        </PathBar>
        <SideTools>
          <ToolButton type="button" aria-label="Add"><PlusIcon /></ToolButton>
          <ToolButton type="button" aria-label="Add component"><NewCompIcon badge /></ToolButton>
          <ToolButton type="button" aria-label="Remove"><DeleteIcon /></ToolButton>
          <ToolButton type="button" aria-label="Edit"><EditIcon /></ToolButton>
          <SideGap />
          <ToolButton type="button" aria-label="Move to top"><MoveIcon end color="#00a2ff" /></ToolButton>
          <ToolButton type="button" aria-label="Move up"><MoveIcon color="#00a2ff" /></ToolButton>
          <ToolButton type="button" $faint aria-label="Move down"><MoveIcon dir="down" color="#c0c0c0" /></ToolButton>
          <ToolButton type="button" $faint aria-label="Move to bottom"><MoveIcon dir="down" end color="#c0c0c0" /></ToolButton>
        </SideTools>
        <ScrollFrame>
          <Viewport>
            <Grid $width={tableWidth}>
              <colgroup>
                {columns.map(([c, w]) => <col key={c} width={w} />)}
              </colgroup>
              <thead>
                <tr>{columns.map(([c]) => <HeadCell key={c} scope="col">{c}</HeadCell>)}</tr>
              </thead>
              <tbody>
                <GapRow>{columns.map(([c]) => <GapCell key={c} />)}</GapRow>
                {modules.map((m, i) => <ModuleRows key={i} mod={m} shade={i % 2 === 1} />)}
              </tbody>
            </Grid>
            <Connections />
            <IrqLines />
          </Viewport>
          <Corner $plain />
          <ScrollBar vertical before={199} thumb={367} after={0} />
          <ScrollBar before={0} thumb={1339} after={57} />
        </ScrollFrame>
        <FilterBar>
          <ToolButton type="button" aria-label="Show clock domains"><ClockDomainIcon /></ToolButton>
          <ToolButton type="button" aria-label="Show reset domains"><ResetDomainIcon /></ToolButton>
          <FilterDivider />
          <ToolButton type="button" aria-label="Filter"><FunnelIcon color="#ff9800" /></ToolButton>
          <ToolButton type="button" $faint aria-label="Clear filter"><FunnelIcon color="#c0c0c0" cross /></ToolButton>
          <FilterLabel>Current filter:</FilterLabel>
        </FilterBar>
      </ContentsBody>
    </Panel>
  );
}

function MessagesPanel() {
  return (
    <Panel $size={239}>
      <TabStrip>
        <Tab icon={<MessagesIcon />} label="Messages" active="plain" />
        <PanelTools />
      </TabStrip>
      <ScrollFrame $margin="2px 3px 3px 2px">
        <Viewport>
          <Grid $width={1539}>
            <colgroup><col width="75" /><col width="138" /><col width="1326" /></colgroup>
            <thead>
              <tr>{["Type", "Path", "Message"].map((c) => <HeadCell key={c} $shift={7} scope="col">{c}</HeadCell>)}</tr>
            </thead>
            <tbody>
              {messages.map(([kind, tone, path, strong, text], i) => (
                <tr key={i}>
                  <MsgCell>
                    <TypeWrap $child={!!text}>
                      {!text && <ExpandPin />}
                      {kind === "warn" ? <WarnIcon /> : <InfoIcon />}
                    </TypeWrap>
                  </MsgCell>
                  <MsgCell $tone={tone} $bold={!!text}>{path}</MsgCell>
                  <MsgCell $tone={tone}>{strong && <b>{strong}</b>}{text}</MsgCell>
                </tr>
              ))}
            </tbody>
          </Grid>
        </Viewport>
        <Corner>
          <IconButton type="button" aria-label="Customize columns"><WandIcon /></IconButton>
        </Corner>
        <ScrollBar vertical before={0} thumb={91} after={46} />
        <ScrollBar before={0} thumb={1357} after={72} />
      </ScrollFrame>
    </Panel>
  );
}

const controls = [
  ["Roll up", <path key="a" d="M3 10l4-4 4 4" stroke="#2e3436" strokeWidth="2.400" />],
  ["Minimize window", <path key="b" d="M3 11h9" stroke="#2e3436" strokeWidth="2" />],
  ["Maximize window", <rect key="c" x="4" y="5" width="5" height="5" stroke="#2e3436" strokeWidth="2" />],
  ["Close window", <path key="d" d="M3 3l8 8M11 3l-8 8" stroke="#2e3436" strokeWidth="2.400" />],
];

export default function App() {
  return (
    <Window>
      <GlobalStyle />
      <TitleBar>
        <AppIcon />
        <Title>Platform Designer - soc_system.qsys* (/home/konrad/intelLabs/lab5/soc_system.qsys)</Title>
        <WindowControls>
          {controls.map(([label, mark]) => (
            <IconButton key={label} type="button" aria-label={label}>
              <Svg w={14} h={14} crisp={false}>{mark}</Svg>
            </IconButton>
          ))}
        </WindowControls>
      </TitleBar>
      <MenuBar>
        {["File", "Edit", "System", "Generate", "View", "Tools", "Help"].map((m) => (
          <MenuItem key={m} type="button">{m}</MenuItem>
        ))}
      </MenuBar>
      <Workspace>
        <Column>
          <CatalogPanel />
          <HierarchyPanel />
        </Column>
        <Column>
          <ContentsPanel />
          <MessagesPanel />
        </Column>
      </Workspace>
      <StatusBar>
        <StatusText>0 Errors, 4 Warnings</StatusText>
        <TextButton type="button">Generate HDL...</TextButton>
        <TextButton type="button">Finish</TextButton>
      </StatusBar>
    </Window>
  );
}
